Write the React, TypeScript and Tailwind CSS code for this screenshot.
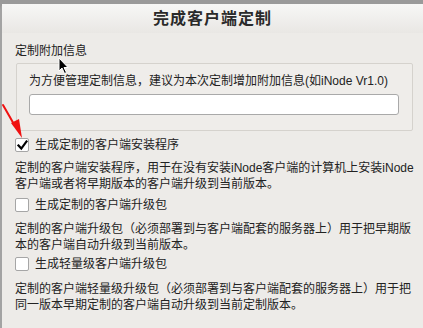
import React from "react";

const FONT = { fontFamily: '"Liberation Sans", "Noto Sans CJK SC", sans-serif' };

function Check({ checked }: { checked?: boolean }) {
  return (
    <div className="w-[14px] h-[14px] bg-white border border-[#a6a6a6] rounded-[2px] flex items-center justify-center shrink-0">
      {checked && (
        <svg width="11" height="11" viewBox="0 0 11 11">
          <path d="M1.5 5.5 L4.3 8.6 L9.5 1.5" fill="none" stroke="#000" strokeWidth="2.2" strokeLinecap="square" />
        </svg>
      )}
    </div>
  );
}

function Option({
  label,
  lines,
  checked,
  descGap,
}: {
  label: string;
  lines: string[];
  checked?: boolean;
  descGap: string;
}) {
  return (
    <div className="flex flex-col">
      <div className="flex items-center gap-[6px] h-[16px]">
        <Check checked={checked} />
        <span>{label}</span>
      </div>
      <div className={`${descGap} leading-[16px] whitespace-nowrap`}>
        {lines.map((l) => (
          <div key={l}>{l}</div>
        ))}
      </div>
    </div>
  );
}

export default function App() {
  return (
    <div className="w-[423px] h-[328px] bg-[#9a9a9a] overflow-hidden relative text-[12px] text-[#222]" style={FONT}>
      <div className="mt-[4px] h-[324px] bg-[#edebe8] rounded-tl-[6px] border-l-[2px] border-[#a3a3a3] flex flex-col">
        <div className="h-[29px] bg-gradient-to-b from-[#f7f7f6] to-[#e9e7e4] flex items-center justify-center">
          <span className="text-[16px] font-bold text-[#2a2a2a] tracking-[1px]">完成客户端定制</span>
        </div>
        <div className="pl-[13px] pr-[10px] flex flex-col">
          <div className="mt-[10px] leading-[16px]">定制附加信息</div>
          <div className="mt-[4px] ml-[1px] h-[68px] border border-[#d5d2cd] rounded-[2px] bg-[#efedea] pl-[12px] pr-[13px] pt-[9px]">
            <div className="leading-[16px]">为方便管理定制信息，建议为本次定制增加附加信息(如iNode Vr1.0)</div>
            <div className="mt-[5px] h-[21px] bg-white border border-[#a9a9a9] rounded-[3px]" />
          </div>
          <div className="mt-[6px] flex flex-col">
            <Option
              checked
              descGap="mt-[7px]"
              label="生成定制的客户端安装程序"
              lines={[
                "定制的客户端安装程序，用于在没有安装iNode客户端的计算机上安装iNode",
                "客户端或者将早期版本的客户端升级到当前版本。",
              ]}
            />
            <div className="h-[5px]" />
            <Option
              descGap="mt-[8px]"
              label="生成定制的客户端升级包"
              lines={[
                "定制的客户端升级包（必须部署到与客户端配套的服务器上）用于把早期版",
                "本的客户端自动升级到当前版本。",
              ]}
            />
            <div className="h-[3px]" />
            <Option
              descGap="mt-[9px]"
              label="生成轻量级客户端升级包"
              lines={[
                "定制的客户端轻量级升级包（必须部署到与客户端配套的服务器上）用于把",
                "同一版本早期定制的客户端自动升级到当前定制版本。",
              ]}
            />
          </div>
        </div>
      </div>
      <svg className="absolute left-0 top-[100px]" width="30" height="45" viewBox="0 0 30 45">
        <path d="M3 5 L15 26" stroke="#f01010" strokeWidth="2" strokeLinecap="round" />
        <polygon points="11,23 19,19 22,38" fill="#f01010" />
      </svg>
      <svg className="absolute left-[58px] top-[57px]" width="12" height="18" viewBox="0 0 12 18">
        <path d="M1 1 L1 14 L4 11 L6.5 16.5 L8.5 15.5 L6 10.5 L10 10.5 Z" fill="#000" stroke="#fff" strokeWidth="1" />
      </svg>
    </div>
  );
}
